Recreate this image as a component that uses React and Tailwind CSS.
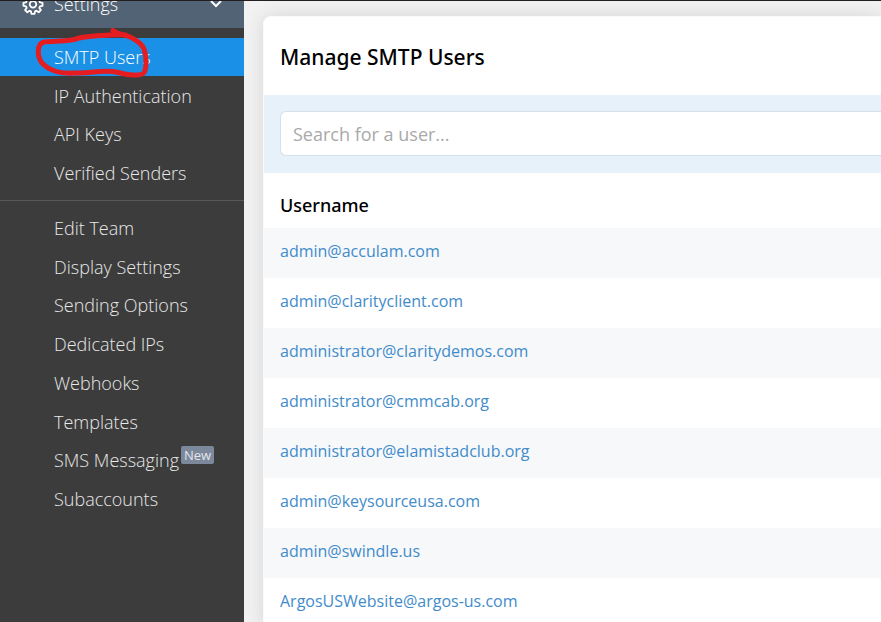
import React from "react";

const primaryLinks = ["SMTP Users", "IP Authentication", "API Keys", "Verified Senders"];

const secondaryLinks = [
  "Edit Team",
  "Display Settings",
  "Sending Options",
  "Dedicated IPs",
  "Webhooks",
  "Templates",
  "SMS Messaging",
  "Subaccounts",
];

const users = [
  "admin@acculam.com",
  "admin@clarityclient.com",
  "administrator@claritydemos.com",
  "administrator@cmmcab.org",
  "administrator@elamistadclub.org",
  "admin@keysourceusa.com",
  "admin@swindle.us",
  "ArgosUSWebsite@argos-us.com",
];

function GearIcon() {
  return (
    <svg viewBox="0 0 24 24" className="size-[22px]" fill="none" stroke="white" strokeWidth="2" strokeLinejoin="round" aria-hidden="true">
      <path d="M10.3 2h3.4l.5 2.8 1.6.7 2.4-1.7 2.4 2.4-1.7 2.4.7 1.6 2.8.5v3.4l-2.8.5-.7 1.6 1.7 2.4-2.4 2.4-2.4-1.7-1.6.7-.5 2.8h-3.4l-.5-2.8-1.6-.7-2.4 1.7-2.4-2.4 1.7-2.4-.7-1.6-2.8-.5v-3.4l2.8-.5.7-1.6-1.7-2.4 2.4-2.4 2.4 1.7 1.6-.7z" />
      <circle cx="12" cy="12.4" r="3.6" />
    </svg>
  );
}

function NavLink({ label, active }) {
  return (
    <li className="pb-px">
      <a href="#" className={`flex h-full items-center pl-[54px] ${active ? "bg-[#1a91e7] text-white" : "text-[#e8e8e8]"}`}>
        {label}
        {label === "SMS Messaging" && (
          <span className="mb-[10px] ml-0.5 rounded-xs bg-[#7c889c] px-[3px] text-[13px] leading-[18px] font-normal text-[#e3e6eb]">
            New
          </span>
        )}
      </a>
    </li>
  );
}

function Sidebar() {
  return (
    <nav className="relative w-[244px] shrink-0 bg-[#3c3c3c] text-lg font-light">
      <div className="flex h-[27px] items-end overflow-hidden bg-[#526375]">
        <button type="button" className="flex h-12 w-full shrink-0 items-center pr-[22px] pl-[22px] text-white">
          <GearIcon />
          <span className="ml-[10px]">Settings</span>
          <svg viewBox="0 0 12 8" className="ml-auto h-2 w-3" fill="none" stroke="white" strokeWidth="2" aria-hidden="true">
            <path d="M1 1l5 5 5-5" />
          </svg>
        </button>
      </div>
      <ul className="mt-[10px] grid h-[155px] grid-rows-4">
        {primaryLinks.map((label, i) => (
          <NavLink key={label} label={label} active={i === 0} />
        ))}
      </ul>
      <hr className="my-[7px] border-[#585858]" />
      <ul className="mt-2 grid h-[310px] grid-rows-8">
        {secondaryLinks.map((label) => (
          <NavLink key={label} label={label} />
        ))}
      </ul>
      <svg
        viewBox="0 0 120 56"
        className="pointer-events-none absolute top-[25px] left-[32px] h-[56px] w-[120px]"
        fill="none"
        stroke="#e51c20"
        strokeWidth="5"
        strokeLinecap="round"
        strokeLinejoin="round"
        aria-hidden="true"
      >
        <path d="M81 4.500Q88 9 94 9L86 8.500C76 9.500 58 9.500 47 12C39 16 22 14.500 12 16C4 18 5 32 11 38C18 45 27 48 42 47C57 48 72 43 84 46C95 49 110 51 112.500 46C115 40 114 28 112 23C109 16 99 10 88 8" />
      </svg>
    </nav>
  );
}

export default function App() {
  return (
    <div className="flex h-screen overflow-hidden border-t border-[#231f20] bg-[#f2f2f2] font-['Open_Sans','Noto_Sans',sans-serif]">
      <Sidebar />
      <main className="min-w-0 flex-1 pt-[15px] pl-[19px]">
        <section className="min-h-full overflow-hidden rounded-tl-lg border-t border-l border-[#fafafa] bg-white shadow-[0_0_20px_rgba(0,0,0,0.12)]">
          <h1 className="flex h-[78px] items-center px-4 pt-1 font-['Noto_Sans',sans-serif] text-[21px] font-medium text-black">Manage SMTP Users</h1>
          <div className="h-[78px] bg-[#e7f1fa] pt-4 pl-4">
            <input
              type="text"
              aria-label="Search for a user"
              placeholder="Search for a user..."
              className="block h-[45px] w-full rounded-l-md border border-r-0 border-[#d3e1ec] bg-white px-3 text-lg text-black outline-none placeholder:text-[#a9a9a9]"
            />
          </div>
          <table className="w-full text-left">
            <thead>
              <tr className="h-[55px]">
                <th scope="col" className="px-4 pt-2 font-['Noto_Sans',sans-serif] text-lg font-medium text-black">Username</th>
              </tr>
            </thead>
            <tbody>
              {users.map((user) => (
                <tr key={user} className="h-[50px] odd:bg-[#f6f8fa]">
                  <td className="px-4 pb-1 text-base text-[#428bca]">
                    <a href="#">{user}</a>
                  </td>
                </tr>
              ))}
            </tbody>
          </table>
        </section>
      </main>
    </div>
  );
}
